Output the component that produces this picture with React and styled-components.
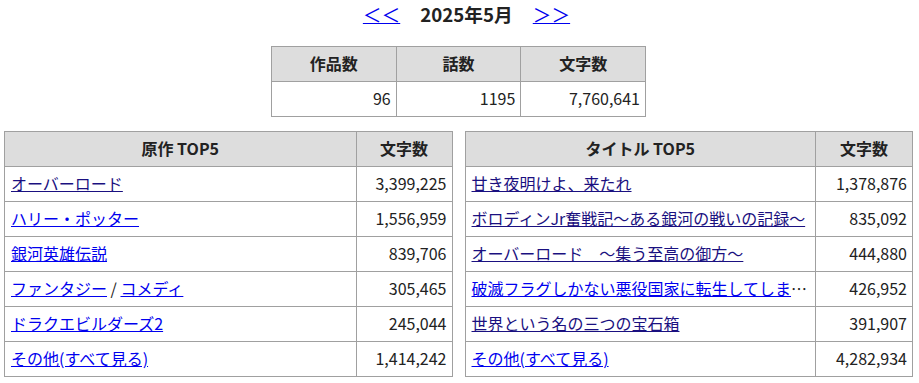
import React from 'react';
import styled, { createGlobalStyle } from 'styled-components';

const GlobalStyle = createGlobalStyle`
  body {
    margin: 0;
    background: #fff;
    color: #222;
    font-family: "Noto Sans CJK JP", "Noto Sans", sans-serif;
    font-size: 16px;
  }
`;

const Page = styled.div`
  padding: 0 6px 0 4px;
`;

const MonthNav = styled.h3`
  display: flex;
  justify-content: center;
  align-items: center;
  gap: 20px;
  margin: 0 0 19px 16px;
  font-size: 18.7px;
  line-height: 27px;
  font-weight: bold;
  color: #222;
`;

const NavLink = styled.a`
  color: #0000ee;
  font-weight: normal;
  text-decoration: underline;
`;

const Table = styled.table`
  border-collapse: collapse;
  table-layout: fixed;
  width: ${(p) => p.$width}px;
  margin: ${(p) => (p.$center ? '0 auto 14px' : '0')};
`;

const Th = styled.th`
  background: #dddddd;
  border: 1px solid #a0a0a0;
  padding: 4px 6px 6px;
  line-height: 24px;
  font-weight: bold;
  text-align: center;
  color: #222;
  width: ${(p) => (p.$width ? `${p.$width}px` : 'auto')};
`;

const Td = styled.td`
  border: 1px solid #a0a0a0;
  padding: 4px 6px 6px;
  line-height: 24px;
  text-align: ${(p) => (p.$num ? 'right' : 'left')};
  padding-right: ${(p) => (p.$num ? '5px' : '6px')};
  white-space: nowrap;
  overflow: hidden;
  color: #222;
`;

const ItemLink = styled.a`
  color: ${(p) => (p.$visited ? '#1a1080' : '#0000ee')};
  text-decoration: underline;
`;

const Columns = styled.div`
  display: flex;
  gap: 12px;
  align-items: flex-start;
`;

const originals = [
  { links: [{ t: 'オーバーロード', v: true }], n: '3,399,225' },
  { links: [{ t: 'ハリー・ポッター' }], n: '1,556,959' },
  { links: [{ t: '銀河英雄伝説' }], n: '839,706' },
  { links: [{ t: 'ファンタジー' }, { t: 'コメディ' }], n: '305,465' },
  { links: [{ t: 'ドラクエビルダーズ2' }], n: '245,044' },
  { links: [{ t: 'その他(すべて見る)' }], n: '1,414,242' },
];

const titles = [
  { t: '甘き夜明けよ、来たれ', v: true, n: '1,378,876' },
  { t: 'ボロディンJr奮戦記～ある銀河の戦いの記録～', v: true, n: '835,092' },
  { t: 'オーバーロード　～集う至高の御方～', v: true, n: '444,880' },
  { t: '破滅フラグしかない悪役国家に転生してしま', more: true, n: '426,952' },
  { t: '世界という名の三つの宝石箱', v: true, n: '391,907' },
  { t: 'その他(すべて見る)', n: '4,282,934' },
];

export default function App() {
  return (
    <>
      <GlobalStyle />
      <Page>
        <MonthNav>
          <NavLink href="#">＜＜</NavLink>
          <span>2025年5月</span>
          <NavLink href="#">＞＞</NavLink>
        </MonthNav>

        <Table $width={375} $center>
          <thead>
            <tr>
              <Th>作品数</Th>
              <Th>話数</Th>
              <Th>文字数</Th>
            </tr>
          </thead>
          <tbody>
            <tr>
              <Td $num>96</Td>
              <Td $num>1195</Td>
              <Td $num>7,760,641</Td>
            </tr>
          </tbody>
        </Table>

        <Columns>
          <Table $width={449}>
            <thead>
              <tr>
                <Th>原作 TOP5</Th>
                <Th $width={83}>文字数</Th>
              </tr>
            </thead>
            <tbody>
              {originals.map((row, i) => (
                <tr key={i}>
                  <Td>
                    {row.links.map((l, j) => (
                      <React.Fragment key={j}>
                        {j > 0 && ' / '}
                        <ItemLink href="#" $visited={l.v}>{l.t}</ItemLink>
                      </React.Fragment>
                    ))}
                  </Td>
                  <Td $num>{row.n}</Td>
                </tr>
              ))}
            </tbody>
          </Table>

          <Table $width={449}>
            <thead>
              <tr>
                <Th>タイトル TOP5</Th>
                <Th $width={84}>文字数</Th>
              </tr>
            </thead>
            <tbody>
              {titles.map((row, i) => (
                <tr key={i}>
                  <Td>
                    <ItemLink href="#" $visited={row.v}>{row.t}</ItemLink>
                    {row.more && '…'}
                  </Td>
                  <Td $num>{row.n}</Td>
                </tr>
              ))}
            </tbody>
          </Table>
        </Columns>
      </Page>
    </>
  );
}
